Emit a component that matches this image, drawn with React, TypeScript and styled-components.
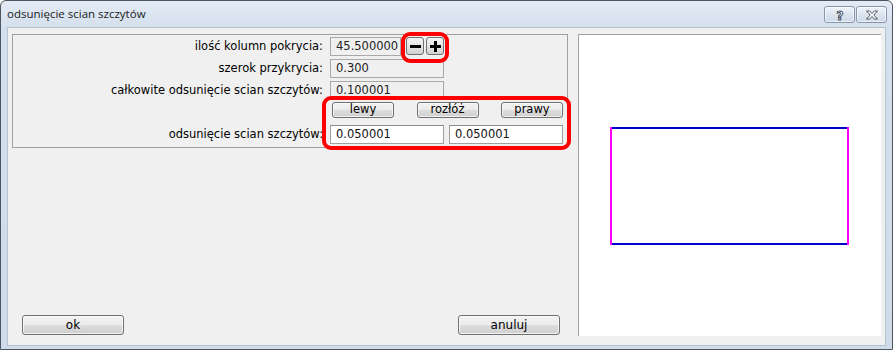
import React from 'react';
import styled, { createGlobalStyle } from 'styled-components';

const GlobalStyle = createGlobalStyle`
  html, body {
    margin: 0;
    padding: 0;
  }
  body {
    width: 893px;
    height: 350px;
    overflow: hidden;
    background: #ffffff;
    font-family: "DejaVu Sans", "Noto Sans", sans-serif;
    font-size: 11.5px;
    color: #000;
  }
`;

const Window = styled.div`
  box-sizing: border-box;
  width: 893px;
  height: 350px;
  border: 1px solid #4d5560;
  border-radius: 6px 6px 0 0;
  background: linear-gradient(#e3ebf5, #d5e0ed 26px, #cfdbe9);
  display: flex;
  flex-direction: column;
  padding: 0 6px 3px 6px;
`;

const TitleBar = styled.div`
  height: 26px;
  display: flex;
  align-items: center;
  justify-content: space-between;
`;

const Title = styled.span`
  font-family: "Open Sans", "Noto Sans", sans-serif;
  font-size: 11.5px;
  color: #1a1a1a;
  margin-top: -1px;
`;

const TitleButtons = styled.div`
  display: flex;
  gap: 1px;
  margin-right: -1px;
  align-self: flex-start;
  margin-top: 5px;
`;

const CaptionButton = styled.div`
  box-sizing: border-box;
  width: 31px;
  height: 17px;
  border: 1px solid #8696ab;
  border-radius: 3px;
  background: linear-gradient(#f1f5fa, #dbe4ef 50%, #cfdae7);
  box-shadow: inset 0 0 0 1px rgba(255, 255, 255, 0.6);
  display: flex;
  align-items: center;
  justify-content: center;
`;

const Client = styled.div`
  flex: 1;
  box-sizing: border-box;
  background: #f0f0f0;
  border: 1px solid #b6c2d1;
  display: flex;
  padding: 6px 4px 9px 4px;
`;

const LeftColumn = styled.div`
  width: 556px;
  display: flex;
  flex-direction: column;
  justify-content: space-between;
`;

const GroupBox = styled.div`
  position: relative;
  box-sizing: border-box;
  height: 114px;
  border: 1px solid #a0a0a0;
  display: grid;
  grid-template-columns: 1fr 234px;
  grid-auto-rows: 20px;
  column-gap: 7px;
  row-gap: 2px;
  padding: 1px 3px 0 0;
`;

const Label = styled.div`
  text-align: right;
  align-self: center;
  white-space: nowrap;
`;

const Controls = styled.div<{ $spread?: boolean }>`
  display: flex;
  align-items: center;
  gap: ${({ $spread }) => ($spread ? '0' : '5px')};
  justify-content: ${({ $spread }) => ($spread ? 'space-between' : 'flex-start')};
  padding: ${({ $spread }) => ($spread ? '0 1px 0 2px' : '0')};
`;

const ReadField = styled.div<{ $width: number }>`
  box-sizing: border-box;
  width: ${({ $width }) => $width}px;
  height: 19px;
  border: 1px solid #a9a9a9;
  background: #f0f0f0;
  padding: 0 5px;
  display: flex;
  align-items: center;
  color: #222;
`;

const EditField = styled.input`
  box-sizing: border-box;
  width: 114px;
  height: 19px;
  margin: 0;
  border: 1px solid #a0a0a0;
  border-top-color: #8c8c8c;
  background: #fff;
  padding: 0 5px;
  font: inherit;
  color: #111;
  outline: none;
`;

const StepGroup = styled.div`
  display: flex;
  gap: 2px;
`;

const StepButton = styled.div`
  box-sizing: border-box;
  width: 18px;
  height: 18px;
  border: 1px solid #707070;
  border-radius: 3px;
  background: linear-gradient(#f4f4f4, #e4e4e4 50%, #d2d2d2);
  display: flex;
  align-items: center;
  justify-content: center;
`;

const PushButton = styled.button<{ $width: number; $height: number }>`
  box-sizing: border-box;
  width: ${({ $width }) => $width}px;
  height: ${({ $height }) => $height}px;
  margin: 0;
  padding: 0 0 1px 0;
  border: 1px solid #707070;
  border-radius: 3px;
  background: linear-gradient(#f2f2f2, #ebebeb 50%, #dddddd 51%, #cfcfcf);
  box-shadow: inset 0 0 0 1px rgba(255, 255, 255, 0.7);
  font: inherit;
  font-size: ${({ $height }) => ($height > 17 ? '12px' : '11.5px')};
  line-height: 1;
  color: #000;
  align-self: flex-start;
`;

const FooterRow = styled.div`
  display: flex;
  justify-content: space-between;
  padding: 0 8px 1px 10px;
`;

const Highlight = styled.div<{ $left: number; $top: number; $w: number; $h: number }>`
  position: absolute;
  left: ${({ $left }) => $left}px;
  top: ${({ $top }) => $top}px;
  width: ${({ $w }) => $w}px;
  height: ${({ $h }) => $h}px;
  box-sizing: border-box;
  border: 4px solid #ff0000;
  border-radius: 9px;
  pointer-events: none;
`;

const Preview = styled.div`
  flex: 1;
  margin-left: 10px;
  background: #fff;
  border-top: 1px solid #a0a0a0;
  border-left: 1px solid #a0a0a0;
  display: flex;
  align-items: center;
  justify-content: center;
  padding-right: 2px;
`;

const Minus = () => (
  <svg width="11" height="11" viewBox="0 0 11 11">
    <rect x="0" y="4" width="11" height="3" fill="#000" />
  </svg>
);

const Plus = () => (
  <svg width="11" height="11" viewBox="0 0 11 11">
    <rect x="0" y="4" width="11" height="3" fill="#000" />
    <rect x="4" y="0" width="3" height="11" fill="#000" />
  </svg>
);

const HelpGlyph = () => (
  <svg width="12" height="14" viewBox="0 0 12 14">
    <text
      x="6"
      y="12"
      textAnchor="middle"
      fontFamily="DejaVu Sans, sans-serif"
      fontWeight="bold"
      fontSize="12"
      fill="#fff"
      stroke="#4a5566"
      strokeWidth="1"
    >
      ?
    </text>
  </svg>
);

const CloseGlyph = () => (
  <svg width="14" height="10" viewBox="0 0 14 10">
    <path
      d="M1.5 1 H4.5 L7 3.4 L9.5 1 H12.5 L8.8 5 L12.5 9 H9.5 L7 6.6 L4.5 9 H1.5 L5.2 5 Z"
      fill="#fff"
      stroke="#4a5566"
      strokeWidth="1"
      strokeLinejoin="round"
    />
  </svg>
);

export default function App() {
  return (
    <>
      <GlobalStyle />
      <Window>
        <TitleBar>
          <Title>odsunięcie scian szczytów</Title>
          <TitleButtons>
            <CaptionButton>
              <HelpGlyph />
            </CaptionButton>
            <CaptionButton>
              <CloseGlyph />
            </CaptionButton>
          </TitleButtons>
        </TitleBar>
        <Client>
          <LeftColumn>
            <GroupBox>
              <Label>ilość kolumn pokrycia:</Label>
              <Controls>
                <ReadField $width={71}>45.500000</ReadField>
                <StepGroup>
                  <StepButton>
                    <Minus />
                  </StepButton>
                  <StepButton>
                    <Plus />
                  </StepButton>
                </StepGroup>
              </Controls>

              <Label>szerok przykrycia:</Label>
              <Controls>
                <ReadField $width={114}>0.300</ReadField>
              </Controls>

              <Label>całkowite odsunięcie scian szczytów:</Label>
              <Controls>
                <ReadField $width={114}>0.100001</ReadField>
              </Controls>

              <Label />
              <Controls $spread>
                <PushButton $width={62} $height={16}>lewy</PushButton>
                <PushButton $width={62} $height={16}>rozłóż</PushButton>
                <PushButton $width={62} $height={16}>prawy</PushButton>
              </Controls>

              <Label>odsunięcie scian szczytów:</Label>
              <Controls>
                <EditField defaultValue="0.050001" />
                <EditField defaultValue="0.050001" />
              </Controls>

              <Highlight $left={388} $top={-3} $w={48} $h={31} />
              <Highlight $left={309} $top={61} $w={249} $h={54} />
            </GroupBox>
            <FooterRow>
              <PushButton $width={102} $height={20}>ok</PushButton>
              <PushButton $width={102} $height={20}>anuluj</PushButton>
            </FooterRow>
          </LeftColumn>
          <Preview>
            <svg width="239" height="118" viewBox="0 0 239 118">
              <line x1="1" y1="1" x2="238" y2="1" stroke="#0000cc" strokeWidth="2" />
              <line x1="1" y1="117" x2="238" y2="117" stroke="#0000cc" strokeWidth="2" />
              <line x1="1" y1="0" x2="1" y2="118" stroke="#ff00ff" strokeWidth="2" />
              <line x1="238" y1="0" x2="238" y2="118" stroke="#ff00ff" strokeWidth="2" />
            </svg>
          </Preview>
        </Client>
      </Window>
    </>
  );
}
